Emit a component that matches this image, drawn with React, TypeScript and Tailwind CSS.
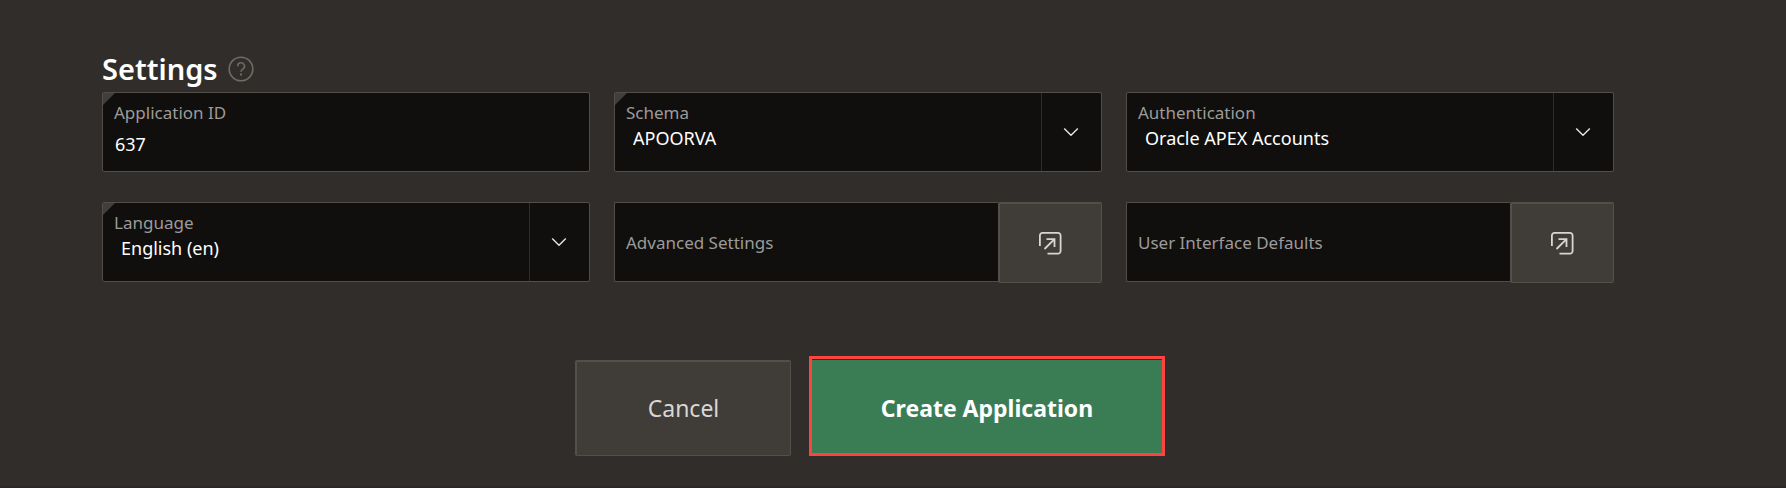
import { useId, type ReactNode } from "react";

function Corner() {
  return (
    <span
      aria-hidden="true"
      className="pointer-events-none absolute left-0 top-0 size-3 bg-[#403f3d] [clip-path:polygon(0_0,100%_0,0_100%)]"
    />
  );
}

function Chevron() {
  return (
    <svg aria-hidden="true" viewBox="0 0 16 16" className="size-4" fill="none" stroke="#e6e4e2" strokeWidth="1.4">
      <path d="M1.2 4.500 8 11.300l6.800-6.800" />
    </svg>
  );
}

function OpenIcon() {
  return (
    <svg
      aria-hidden="true"
      viewBox="0 0 24 24"
      className="size-6"
      fill="none"
      stroke="#d8d6d2"
      strokeWidth="1.8"
      strokeLinecap="butt"
    >
      <path d="M1.900 15V4.500a2.600 2.600 0 0 1 2.600-2.600h15.500a2.600 2.600 0 0 1 2.600 2.600v15.500a2.600 2.600 0 0 1-2.600 2.600H9.500" />
      <path d="M6.500 18 16.500 8.200M8.500 8.200h8v7.800" />
    </svg>
  );
}

const box = "relative flex h-20 min-w-0 rounded-xs border border-[#524e48] bg-[#100f0d]";
const labelText = "text-[17px] leading-6 text-[#9c9b99]";

function SelectField({ label, value, required }: { label: string; value: string; required?: boolean }) {
  const id = useId();
  return (
    <div className={box}>
      {required && <Corner />}
      <div className="flex min-w-0 grow flex-col pl-[11px] pt-2">
        <label htmlFor={id} className={labelText}>
          {label}
        </label>
        <select
          id={id}
          defaultValue={value}
          className="mt-px h-6 w-full appearance-none bg-transparent pl-[7px] text-lg leading-6 text-white outline-none"
        >
          <option>{value}</option>
        </select>
      </div>
      <span className="pointer-events-none flex w-15 shrink-0 items-center justify-center border-l border-[#302e2c] pr-0.5">
        <Chevron />
      </span>
    </div>
  );
}

function TextField({ label, value }: { label: string; value: string }) {
  const id = useId();
  return (
    <div className={box}>
      <Corner />
      <div className="flex min-w-0 grow flex-col gap-[7px] px-[11px] pt-2">
        <label htmlFor={id} className={labelText}>
          {label}
        </label>
        <input
          id={id}
          defaultValue={value}
          className="h-6 w-full bg-transparent pl-px text-lg leading-6 text-white outline-none"
        />
      </div>
    </div>
  );
}

function DialogField({ label }: { label: string }) {
  const id = useId();
  return (
    <div className="flex min-w-0 items-start">
      <div className="flex h-20 min-w-0 grow items-center rounded-l-xs border border-r-0 border-[#524e48] bg-[#100f0d] px-[11px] pt-0.5">
        <span id={id} className="truncate text-[17px] leading-6 text-[#9c9b99]">
          {label}
        </span>
      </div>
      <button
        type="button"
        aria-labelledby={id}
        className="flex h-[81px] w-[104px] shrink-0 items-center justify-center rounded-xs border border-l-2 border-t-2 border-[#534f49] bg-[#403c37] pr-0.5"
      >
        <OpenIcon />
      </button>
    </div>
  );
}

function Actions({ children }: { children: ReactNode }) {
  return <div className="flex items-end justify-center gap-[18px] pl-6 pt-[73px]">{children}</div>;
}

export default function App() {
  return (
    <main className="min-h-screen border-b-2 border-[#2b2728] bg-[#312d2a] pb-7 pl-[102px] pr-[172px] pt-[47px] font-['Noto_Sans',sans-serif]">
      <header className="mb-px flex h-11 items-center gap-2.5">
        <h2 className="text-[29px] font-semibold leading-10 text-white">Settings</h2>
        <button type="button" aria-label="Help" className="text-[#6f6b67]">
          <svg viewBox="0 0 26 26" className="size-6.5" fill="none" stroke="currentColor" strokeWidth="1.6">
            <circle cx="13" cy="13" r="11.800" />
            <path d="M9.700 10.200a3.400 3.400 0 1 1 5.100 2.900c-1.200.7-1.800 1.300-1.800 2.700" />
            <path d="M13 17.500v2" strokeWidth="2" />
          </svg>
        </button>
      </header>
      <div className="grid grid-cols-3 gap-x-6 gap-y-[30px]">
        <TextField label="Application ID" value="637" />
        <SelectField label="Schema" value="APOORVA" required />
        <SelectField label="Authentication" value="Oracle APEX Accounts" />
        <SelectField label="Language" value="English (en)" required />
        <DialogField label="Advanced Settings" />
        <DialogField label="User Interface Defaults" />
      </div>
      <Actions>
        <button
          type="button"
          className="h-24 w-[216px] rounded-xs border border-l-2 border-t-2 border-[#534f49] bg-[#403c37] text-[23px] text-[#d8d7d5]"
        >
          Cancel
        </button>
        <div className="border-3 border-[#fe4440] pt-px">
          <button type="button" className="h-[93px] w-[350px] bg-[#3a7d55] pt-1 text-[23px] font-bold text-white">
            Create Application
          </button>
        </div>
      </Actions>
    </main>
  );
}
